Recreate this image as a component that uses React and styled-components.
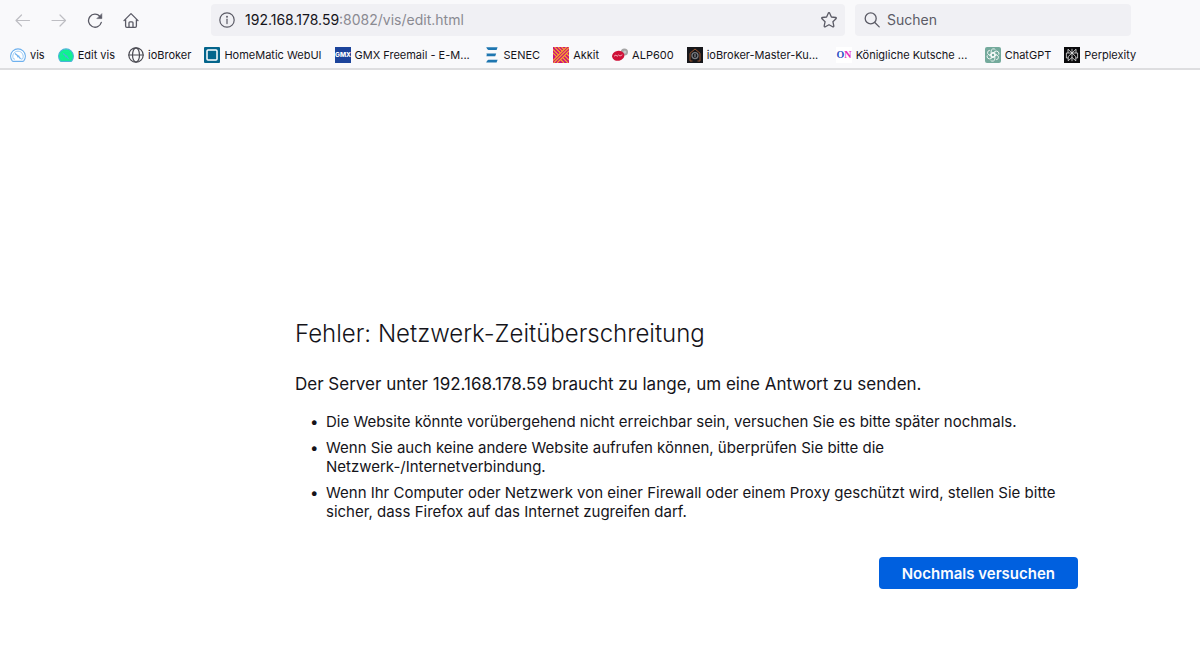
import styled, { createGlobalStyle } from "styled-components";

const GlobalStyle = createGlobalStyle`
  * {
    box-sizing: border-box;
  }

  body {
    margin: 0;
    background-color: #ffffff;
    color: #15141a;
    font-family: Inter, "Liberation Sans", sans-serif;
  }
`;

const Chrome = styled.header`
  background-color: #f9f9fb;
  border-bottom: 2px solid #dedee0;
`;

const Toolbar = styled.div`
  display: flex;
  align-items: center;
  padding: 4px 69px 4px 5px;
`;

const NavButtons = styled.nav`
  display: flex;
  flex: none;
  width: 206px;
`;

const IconButton = styled.button`
  display: flex;
  align-items: center;
  justify-content: center;
  flex: none;
  width: ${(props) => (props.$compact ? "32px" : "36px")};
  height: 32px;
  padding: 0;
  border: 0;
  border-radius: 4px;
  background: none;
  color: #5b5b66;

  &:disabled {
    color: #bebec3;
  }
`;

const Field = styled.div`
  display: flex;
  align-items: center;
  flex: ${(props) => props.$grow} 1 0;
  min-width: 0;
  height: 32px;
  border-radius: 4px;
  background-color: #f0f0f4;
  color: #5b5b66;
`;

const AddressField = styled(Field)`
  margin-right: 10px;
`;

const SearchField = styled(Field)`
  padding-left: 9px;
  gap: 7px;
`;

const Address = styled.a`
  flex: 1;
  padding-left: 2px;
  overflow: hidden;
  white-space: nowrap;
  font-size: 14px;
  line-height: 20px;
  color: #8a8a92;
  text-decoration: none;
`;

const Host = styled.span`
  color: #15141a;
`;

const SearchInput = styled.input`
  flex: 1;
  min-width: 0;
  padding: 0;
  border: 0;
  outline: 0;
  background: none;
  font-family: inherit;
  font-size: 14px;
  line-height: 20px;
  color: #15141a;

  &::placeholder {
    color: #5b5b66;
    opacity: 1;
  }
`;

const Bookmarks = styled.nav`
  display: flex;
  align-items: center;
  gap: 13px;
  height: 28px;
  padding: 2px 10px 0;
  overflow: hidden;
`;

const Bookmark = styled.a`
  display: flex;
  align-items: center;
  gap: 4px;
  flex: none;
  font-size: 11px;
  line-height: 16px;
  white-space: nowrap;
  color: #15141a;
  text-decoration: none;
`;

const BookmarkLabel = styled.span`
  min-width: ${(props) => (props.$long ? "116px" : "0")};
`;

const ErrorPage = styled.main`
  width: 80%;
  max-width: 956px;
  min-width: 320px;
  margin: 0 auto;
  padding: 244px 0 80px 173px;
`;

const Title = styled.h1`
  margin: 0;
  font-size: 24px;
  font-weight: 300;
  line-height: 40px;
`;

const Lead = styled.p`
  margin: 18px 0 0;
  font-size: 17px;
  line-height: 24px;
`;

const Hints = styled.ul`
  margin: 16px 0 0;
  padding: 0 0 0 31px;
  list-style-type: "•\\2002";
  font-size: 15px;
  line-height: 19px;
`;

const Hint = styled.li`
  margin-bottom: 7px;
`;

const Actions = styled.div`
  display: flex;
  justify-content: flex-end;
  margin-top: 36px;
`;

const RetryButton = styled.button`
  height: 32px;
  padding: 0 23px;
  border: 0;
  border-radius: 4px;
  background-color: #0060df;
  color: #fbfbfe;
  font-family: inherit;
  font-size: 15px;
  font-weight: 600;
`;

const LineIcon = ({ children, size = 16, width = 1.2 }) => (
  <svg
    width={size}
    height={size}
    viewBox="0 0 16 16"
    fill="none"
    stroke="currentColor"
    strokeWidth={width}
    strokeLinecap="round"
    strokeLinejoin="round"
    aria-hidden="true"
  >
    {children}
  </svg>
);

const BackIcon = () => (
  <LineIcon>
    <path d="M14.5 8.5H1M6.5 3L1 8.5L6.5 14" />
  </LineIcon>
);

const ForwardIcon = () => (
  <LineIcon>
    <path d="M1 8.5H14.5M9 3L14.5 8.5L9 14" />
  </LineIcon>
);

const ReloadIcon = () => (
  <LineIcon width={1.3}>
    <path d="M14.3 10.4A6.5 6.5 0 1 1 12.9 4.4L14 5.6" />
    <path d="M14.8 2V6.6H10.2Z" fill="currentColor" strokeWidth="0.6" />
  </LineIcon>
);

const HomeIcon = () => (
  <LineIcon width={1.3}>
    <path d="M1 8.6L8 1.6L15 8.6M2.6 7.4V14.1A1.2 1.2 0 0 0 3.8 15.3H12.2A1.2 1.2 0 0 0 13.4 14.1V7.4" />
    <path d="M6 15.2V10.8A1 1 0 0 1 7 9.8H9A1 1 0 0 1 10 10.8V15.2" />
  </LineIcon>
);

const InfoIcon = () => (
  <LineIcon width={1.2}>
    <circle cx="8" cy="8" r="7.2" />
    <path d="M8 7.2V11.6" />
    <circle cx="8" cy="4.8" r="0.4" fill="currentColor" />
  </LineIcon>
);

const StarIcon = () => (
  <LineIcon width={1.3}>
    <path d="M7.3 1.2Q8 0 8.7 1.2L10.4 5L14.6 5.5Q15.8 5.8 15 6.8L11.9 9.7L12.8 13.9Q12.9 15.3 11.7 14.8L8 12.7L4.3 14.8Q3.1 15.3 3.2 13.9L4.1 9.7L1 6.8Q0.2 5.8 1.4 5.5L5.6 5Z" />
  </LineIcon>
);

const SearchIcon = () => (
  <LineIcon width={1.3}>
    <circle cx="6.7" cy="6.4" r="5.5" />
    <path d="M10.8 10.5L15.2 14.9" />
  </LineIcon>
);

const GaugeIcon = ({ fill, stroke, ring }) => (
  <svg width="16" height="16" viewBox="0 0 16 16" fill="none" aria-hidden="true">
    <path
      d="M2.2 13.9A7.4 7.4 0 1 1 13.8 13.9Q13.4 14.4 12.8 14.4H3.2Q2.6 14.4 2.2 13.9Z"
      fill={fill}
      stroke={stroke}
      strokeWidth="1.1"
      strokeLinejoin="round"
    />
    <path
      d="M3.4 11.8A5.2 5.2 0 1 1 12.6 11.8L11 12.2M5 12.2L3.4 11.8"
      stroke={ring}
      strokeWidth="0.9"
    />
    <path d="M5 6.6L8.4 9.2L10.6 11.8M7.2 9.8L9.4 9.2" stroke={stroke} strokeWidth="1.3" />
  </svg>
);

const GlobeIcon = () => (
  <LineIcon width={1.2}>
    <g stroke="#4a4a52">
      <circle cx="8" cy="8" r="7.2" />
      <ellipse cx="8" cy="8" rx="3.5" ry="7.2" />
      <path d="M0.8 8H15.2" />
    </g>
  </LineIcon>
);

const HomeMaticIcon = () => (
  <svg width="16" height="16" viewBox="0 0 16 16" aria-hidden="true">
    <rect width="16" height="16" rx="1" fill="#04658c" />
    <rect x="3" y="3" width="10" height="10" rx="1" fill="#04658c" stroke="#ffffff" strokeWidth="1.5" />
  </svg>
);

const GmxIcon = () => (
  <svg width="16" height="16" viewBox="0 0 16 16" aria-hidden="true">
    <rect width="16" height="16" fill="#1c449b" />
    <text
      x="8"
      y="10.4"
      textAnchor="middle"
      fontFamily="Inter, sans-serif"
      fontSize="6.5"
      fontWeight="800"
      fill="#ffffff"
    >
      GMX
    </text>
  </svg>
);

const SenecIcon = () => (
  <svg width="16" height="16" viewBox="0 0 16 16" fill="#1e76b0" aria-hidden="true">
    <path d="M2.2 0.2H13.6L12.6 2.9H4.4Q3 2.6 2.2 0.2Z" />
    <path d="M2.4 6.6H12.2L11.2 9.2H2.4Q3.2 7.9 2.4 6.6Z" />
    <path d="M4.4 12.8H13.6L12.6 15.6H2.2Q2.8 13.4 4.4 12.8Z" />
  </svg>
);

const AkkitIcon = () => (
  <svg width="16" height="16" viewBox="0 0 16 16" aria-hidden="true">
    <rect width="16" height="16" fill="#c9127c" />
    <g stroke="#fba928" strokeWidth="1.1" fill="none">
      <path d="M0 2.5L5.5 8M0 6L3.8 9.8M1.5 0L7.5 6M5 0L9.2 4.2M8.5 0L11 2.5" />
      <path d="M0 13.6L13.6 0M0.6 16L16 0.6M4 16L16 4" />
      <path d="M7.5 12.5L11 16M9.5 10.5L15 16M11.5 8.5L16 13M13.5 6.5L16 9" />
    </g>
  </svg>
);

const AlpIcon = () => (
  <svg width="16" height="16" viewBox="0 0 16 16" aria-hidden="true">
    <circle cx="12.4" cy="5" r="3.6" fill="#a5a5a5" />
    <circle cx="12.8" cy="5" r="1.6" fill="#c9c9c9" />
    <ellipse cx="6.2" cy="8.8" rx="6.2" ry="5" fill="#cf1138" transform="rotate(-12 6.2 8.8)" />
    <path d="M2 9.2L4 8L5 9.4L6.5 8L8 9L10.4 7.8" stroke="#f0a3b3" strokeWidth="1" fill="none" />
  </svg>
);

const MasterIcon = () => (
  <svg width="16" height="16" viewBox="0 0 16 16" fill="none" aria-hidden="true">
    <rect width="16" height="16" fill="#17171b" />
    <path d="M3 14V6.2L8 2L13 6.2V14H10.5M3 14H5.5" stroke="#a75b32" strokeWidth="0.9" />
    <circle cx="8" cy="8.6" r="3" stroke="#777b80" strokeWidth="1.3" />
    <path d="M8 7V10.2" stroke="#9da1a5" strokeWidth="1" />
  </svg>
);

const OnIcon = () => (
  <svg width="16" height="16" viewBox="0 0 16 16" aria-hidden="true">
    <rect width="16" height="16" fill="#ffffff" />
    <text
      x="8"
      y="10.5"
      textAnchor="middle"
      fontFamily="'Liberation Serif', serif"
      fontSize="10"
      fontWeight="700"
      fill="#2c4fc4"
    >
      O<tspan fill="#e22bc0">N</tspan>
    </text>
  </svg>
);

const ChatGptIcon = () => (
  <svg width="16" height="16" viewBox="0 0 16 16" fill="none" aria-hidden="true">
    <rect width="16" height="16" rx="2" fill="#74aa9c" />
    <g stroke="#ffffff" strokeWidth="0.8" strokeLinejoin="round">
      {[0, 60, 120, 180, 240, 300].map((angle) => (
        <path
          key={angle}
          d="M6.1 9.1V4.4A2.4 2.4 0 0 1 10.5 2.9M6.1 4.9L9.8 7"
          transform={`rotate(${angle} 8 8)`}
        />
      ))}
    </g>
  </svg>
);

const PerplexityIcon = () => (
  <svg width="16" height="16" viewBox="0 0 16 16" fill="none" aria-hidden="true">
    <rect width="16" height="16" fill="#0a0a0c" />
    <path
      d="M8 1.8V14.2M4 2.2L8 6L12 2.2V6H4ZM4 6H2.4V11H4.2M12 6H13.6V11H11.8M8 6L4.2 9.6V13.8L8 10.4M8 6L11.8 9.6V13.8L8 10.4"
      stroke="#e4e4e4"
      strokeWidth="0.8"
    />
  </svg>
);

const bookmarks = [
  { label: "vis", icon: <GaugeIcon fill="#ffffff" stroke="#6fb1ee" ring="#8cc3f4" /> },
  { label: "Edit vis", icon: <GaugeIcon fill="#0bf58d" stroke="#4cb4d8" ring="#1fe69c" /> },
  { label: "ioBroker", icon: <GlobeIcon /> },
  { label: "HomeMatic WebUI", icon: <HomeMaticIcon /> },
  { label: "GMX Freemail - E-M...", icon: <GmxIcon />, long: true },
  { label: "SENEC", icon: <SenecIcon /> },
  { label: "Akkit", icon: <AkkitIcon /> },
  { label: "ALP600", icon: <AlpIcon /> },
  { label: "ioBroker-Master-Ku...", icon: <MasterIcon />, long: true },
  { label: "Königliche Kutsche ...", icon: <OnIcon />, long: true },
  { label: "ChatGPT", icon: <ChatGptIcon /> },
  { label: "Perplexity", icon: <PerplexityIcon /> },
];

const App = () => {
  return (
    <>
      <GlobalStyle />
      <Chrome>
        <Toolbar>
          <NavButtons>
            <IconButton aria-label="Zurück" disabled>
              <BackIcon />
            </IconButton>
            <IconButton aria-label="Vor" disabled>
              <ForwardIcon />
            </IconButton>
            <IconButton aria-label="Neu laden">
              <ReloadIcon />
            </IconButton>
            <IconButton aria-label="Startseite">
              <HomeIcon />
            </IconButton>
          </NavButtons>
          <AddressField $grow={19}>
            <IconButton $compact aria-label="Website-Informationen">
              <InfoIcon />
            </IconButton>
            <Address href="#">
              <Host>192.168.178.59</Host>:8082/vis/edit.html
            </Address>
            <IconButton $compact aria-label="Lesezeichen hinzufügen">
              <StarIcon />
            </IconButton>
          </AddressField>
          <SearchField $grow={8}>
            <SearchIcon />
            <SearchInput type="text" placeholder="Suchen" aria-label="Suchen" />
          </SearchField>
        </Toolbar>
        <Bookmarks>
          {bookmarks.map((item) => (
            <Bookmark href="#" key={item.label}>
              {item.icon}
              <BookmarkLabel $long={item.long}>{item.label}</BookmarkLabel>
            </Bookmark>
          ))}
        </Bookmarks>
      </Chrome>
      <ErrorPage>
        <Title>Fehler: Netzwerk-Zeitüberschreitung</Title>
        <Lead>Der Server unter 192.168.178.59 braucht zu lange, um eine Antwort zu senden.</Lead>
        <Hints>
          <Hint>
            Die Website könnte vorübergehend nicht erreichbar sein, versuchen Sie es bitte später
            nochmals.
          </Hint>
          <Hint>
            Wenn Sie auch keine andere Website aufrufen können, überprüfen Sie bitte die
            Netzwerk-/Internetverbindung.
          </Hint>
          <Hint>
            Wenn Ihr Computer oder Netzwerk von einer Firewall oder einem Proxy geschützt wird,
            stellen Sie bitte sicher, dass Firefox auf das Internet zugreifen darf.
          </Hint>
        </Hints>
        <Actions>
          <RetryButton>Nochmals versuchen</RetryButton>
        </Actions>
      </ErrorPage>
    </>
  );
};

export default App;
